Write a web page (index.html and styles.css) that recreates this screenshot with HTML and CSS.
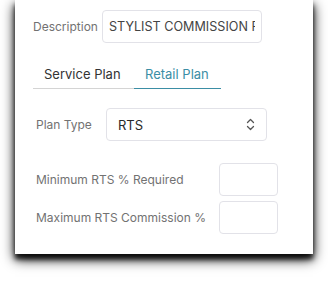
FILE: index.html
```html
<!DOCTYPE html>
<html lang="en">
<head>
    <meta charset="UTF-8">
    <title>Commission Plan</title>
    <link rel="stylesheet" href="styles.css">
</head>
<body>
    <div class="card">
        <div class="desc-row">
            <label class="desc-label">Description</label>
            <input class="field desc-input" type="text" value="STYLIST COMMISSION PLAN">
        </div>

        <div class="tabs">
            <div class="tab">Service Plan</div>
            <div class="tab active">Retail Plan</div>
        </div>

        <div class="form">
            <div class="row plan-row">
                <label class="lbl plan-label">Plan Type</label>
                <div class="field select">
                    <span>RTS</span>
                    <svg class="chev" width="9" height="13" viewBox="0 0 9 13">
                        <path d="M1.5 4.5 L4.5 1.5 L7.5 4.5 M1.5 8.5 L4.5 11.5 L7.5 8.5" fill="none" stroke="#555" stroke-width="1.3" stroke-linecap="round" stroke-linejoin="round"/>
                    </svg>
                </div>
            </div>
            <div class="row min-row">
                <label class="lbl pct-label">Minimum RTS % Required</label>
                <input class="field small" type="text">
            </div>
            <div class="row max-row">
                <label class="lbl pct-label">Maximum RTS Commission %</label>
                <input class="field small" type="text">
            </div>
        </div>
    </div>
</body>
</html>
```

FILE: styles.css
```css
body {margin: 0; background: #fff; font-family: Inter, "Noto Sans", Arial, sans-serif; height: 285px; overflow: hidden}
.card {margin-left: 15px; width: 298px; background: #fff; padding: 10px 0 20px 18px; box-sizing: border-box; box-shadow: 0 5px 12px #000, 0 5px 5px rgba(0,0,0,0.8)}
.desc-row {display: flex; align-items: center; height: 33px}
.desc-label {width: 69px; font-size: 12px; color: #727272}
.field {box-sizing: border-box; border: 1px solid #e2e2e8; border-radius: 4px; background: #fff; font-family: inherit; outline: none}
.desc-input {width: 160px; height: 33px; padding: 0 6px; font-size: 12.6px; color: #444}
.tabs {display: flex; margin-top: 17px; height: 29px}
.tab {padding: 0 11px; font-size: 13px; color: #333; border-bottom: 1px solid #d4d4d4; line-height: 28px}
.tab:first-child {width: 101px; box-sizing: border-box}
.tab.active {color: #3b8ea5; border-bottom-color: #3b8ea5; width: 87px; box-sizing: border-box}
.form {padding-left: 3px}
.row {display: flex; align-items: center}
.lbl {font-size: 12px; color: #727272}
.plan-row {margin-top: 19px}
.plan-label {width: 70px}
.select {width: 161px; height: 33px; display: flex; align-items: center; justify-content: space-between; padding: 0 11px 0 11px; font-size: 13px; color: #2a2a2a}
.chev {display: block}
.min-row {margin-top: 22px}
.max-row {margin-top: 5px}
.pct-label {width: 183px}
.small {width: 59px; height: 33px}
```
